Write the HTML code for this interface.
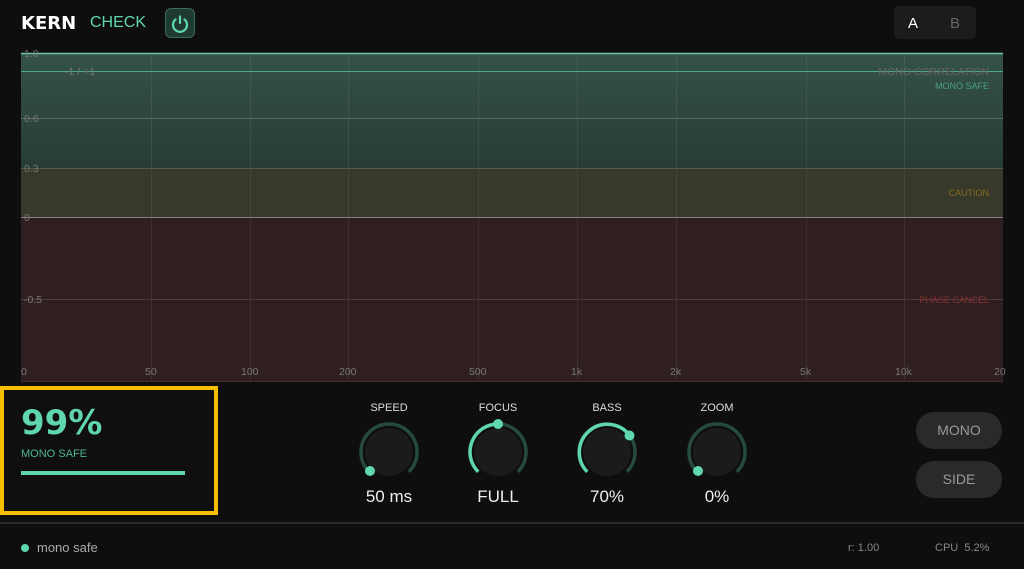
<!DOCTYPE html>
<html><head><meta charset="utf-8"><style>
*{margin:0;padding:0;box-sizing:border-box}
body{width:1024px;height:569px;background:#0e0e0e;overflow:hidden;position:relative;font-family:"Liberation Sans","DejaVu Sans",sans-serif}
.a{position:absolute}
</style></head><body>
<div class="a" style="left:21px;top:13px;font:bold 18px 'DejaVu Sans',sans-serif;color:#fff">KERN</div>
<div class="a" style="left:90px;top:14px;font-size:16px;color:#5fd6b0">CHECK</div>
<div class="a" style="left:165px;top:8px;width:30px;height:30px;border-radius:6px;background:#1f3a33;border:1px solid #3c6a5c"></div>
<svg class="a" style="left:165px;top:8px" width="30" height="30"><path d="M10.5 11.5 A7 7 0 1 0 19.5 11.5" fill="none" stroke="#5fd6b0" stroke-width="2.2" stroke-linecap="round"/><line x1="15" y1="8.5" x2="15" y2="15" stroke="#5fd6b0" stroke-width="2.2" stroke-linecap="round"/></svg>
<div class="a" style="left:894px;top:6px;width:82px;height:33px;border-radius:5px;background:#1c1c1c"></div>
<div class="a" style="left:908px;top:15px;font-size:15px;color:#fff">A</div>
<div class="a" style="left:950px;top:15px;font-size:15px;color:#666">B</div>

<svg class="a" style="left:0;top:0" width="1024" height="390" font-family="Liberation Sans,sans-serif" font-size="10.5">
<defs><linearGradient id="g" x1="0" y1="0" x2="0" y2="1"><stop offset="0" stop-color="#345249"/><stop offset="1" stop-color="#273c36"/></linearGradient></defs>
<rect x="21" y="53" width="982" height="115" fill="url(#g)"/>
<rect x="21" y="168" width="982" height="49" fill="#37392b"/>
<rect x="21" y="217" width="982" height="164" fill="#2f1f20"/>
<g stroke="#ffffff" stroke-opacity="0.07" stroke-width="1">
<line x1="151.5" y1="53" x2="151.5" y2="381"/><line x1="250.5" y1="53" x2="250.5" y2="381"/><line x1="348.5" y1="53" x2="348.5" y2="381"/><line x1="478.5" y1="53" x2="478.5" y2="381"/><line x1="577.5" y1="53" x2="577.5" y2="381"/><line x1="676.5" y1="53" x2="676.5" y2="381"/><line x1="806.5" y1="53" x2="806.5" y2="381"/><line x1="904.5" y1="53" x2="904.5" y2="381"/>
</g>
<line x1="21" y1="53.5" x2="1003" y2="53.5" stroke="#6cc9a8" stroke-width="1.5"/>
<line x1="21" y1="71.5" x2="1003" y2="71.5" stroke="#4fa88a" stroke-width="1"/>
<line x1="21" y1="118.5" x2="1003" y2="118.5" stroke="#5a6a66" stroke-width="1"/>
<line x1="21" y1="168.5" x2="1003" y2="168.5" stroke="#555b48" stroke-width="1"/>
<line x1="21" y1="217.5" x2="1003" y2="217.5" stroke="#8a8080" stroke-width="1"/>
<line x1="21" y1="299.5" x2="1003" y2="299.5" stroke="#4e3c3c" stroke-width="1"/>
<line x1="21" y1="381.5" x2="1003" y2="381.5" stroke="#3a2e2e" stroke-width="1"/>
<g fill="#777">
<text x="24" y="57">1.0</text><text x="65" y="75">-1 / +1</text>
<text x="24" y="122">0.6</text><text x="24" y="172">0.3</text><text x="24" y="221">0</text><text x="24" y="303">-0.5</text>
<text x="21" y="375">0</text><text x="145" y="375">50</text><text x="241" y="375">100</text><text x="339" y="375">200</text><text x="469" y="375">500</text><text x="571" y="375">1k</text><text x="670" y="375">2k</text><text x="800" y="375">5k</text><text x="895" y="375">10k</text><text x="994" y="375">20</text>
<text x="989" y="75" text-anchor="end" fill="#666">MONO CORRELATION</text>
</g>
<text x="989" y="89" text-anchor="end" fill="#4aa080" font-size="9">MONO SAFE</text>
<text x="989" y="196" text-anchor="end" fill="#8a6a20" font-size="9">CAUTION</text>
<text x="989" y="303" text-anchor="end" fill="#8a3030" font-size="9">PHASE CANCEL</text>
</svg>

<div class="a" style="left:0;top:386px;width:218px;height:129px;border:4px solid #f5bf00;background:#0f0f0f"></div>
<div class="a" style="left:21px;top:403px;font:bold 34px 'DejaVu Sans',sans-serif;color:#5fd6b0">99%</div>
<div class="a" style="left:21px;top:448px;font-size:11px;color:#4fb592">MONO SAFE</div>
<div class="a" style="left:21px;top:471px;width:164px;height:4px;background:#5fd6b0"></div>

<svg class="a" style="left:330px;top:395px" width="450" height="120" font-family="Liberation Sans,sans-serif" text-anchor="middle">
<g font-size="11" fill="#ddd"><text x="59" y="16">SPEED</text><text x="168" y="16">FOCUS</text><text x="277" y="16">BASS</text><text x="387" y="16">ZOOM</text></g>
<g font-size="17" fill="#eee"><text x="59" y="107">50 ms</text><text x="168" y="107">FULL</text><text x="277" y="107">70%</text><text x="387" y="107">0%</text></g>
<g fill="none" stroke-width="3.5" stroke="#264a40" stroke-linecap="butt">
<path d="M39.2 76.8 A28 28 0 1 1 78.8 76.8"/><path d="M148.2 76.8 A28 28 0 1 1 187.8 76.8"/><path d="M257.2 76.8 A28 28 0 1 1 296.8 76.8"/><path d="M367.2 76.8 A28 28 0 1 1 406.8 76.8"/>
</g>
<g fill="none" stroke-width="3.5" stroke="#5fd6b0"><path d="M148.2 76.8 A28 28 0 0 1 168 29"/><path d="M257.2 76.8 A28 28 0 1 1 299.7 40.5"/></g>
<g fill="#1b1b1b"><circle cx="59" cy="57" r="24"/><circle cx="168" cy="57" r="24"/><circle cx="277" cy="57" r="24"/><circle cx="387" cy="57" r="24"/></g>
<g fill="#5fd6b0"><circle cx="40" cy="76" r="5"/><circle cx="168" cy="29" r="5"/><circle cx="299.5" cy="40.5" r="5"/><circle cx="368" cy="76" r="5"/></g>
</svg>

<div class="a" style="left:916px;top:412px;width:86px;height:37px;border-radius:18px;background:#2a2a2a;color:#999;font-size:14px;text-align:center;line-height:37px">MONO</div>
<div class="a" style="left:916px;top:461px;width:86px;height:37px;border-radius:18px;background:#2a2a2a;color:#999;font-size:14px;text-align:center;line-height:37px">SIDE</div>

<div class="a" style="left:0;top:522px;width:1024px;height:2px;background:#2a2a2a"></div>
<div class="a" style="left:21px;top:544px;width:8px;height:8px;border-radius:50%;background:#5fd6b0"></div>
<div class="a" style="left:37px;top:540px;font-size:13px;color:#aaa">mono safe</div>
<div class="a" style="left:848px;top:542px;font-size:11px;color:#888">r: 1.00</div>
<div class="a" style="left:935px;top:542px;font-size:11px;color:#888">CPU&nbsp; 5.2%</div>
</body></html>
